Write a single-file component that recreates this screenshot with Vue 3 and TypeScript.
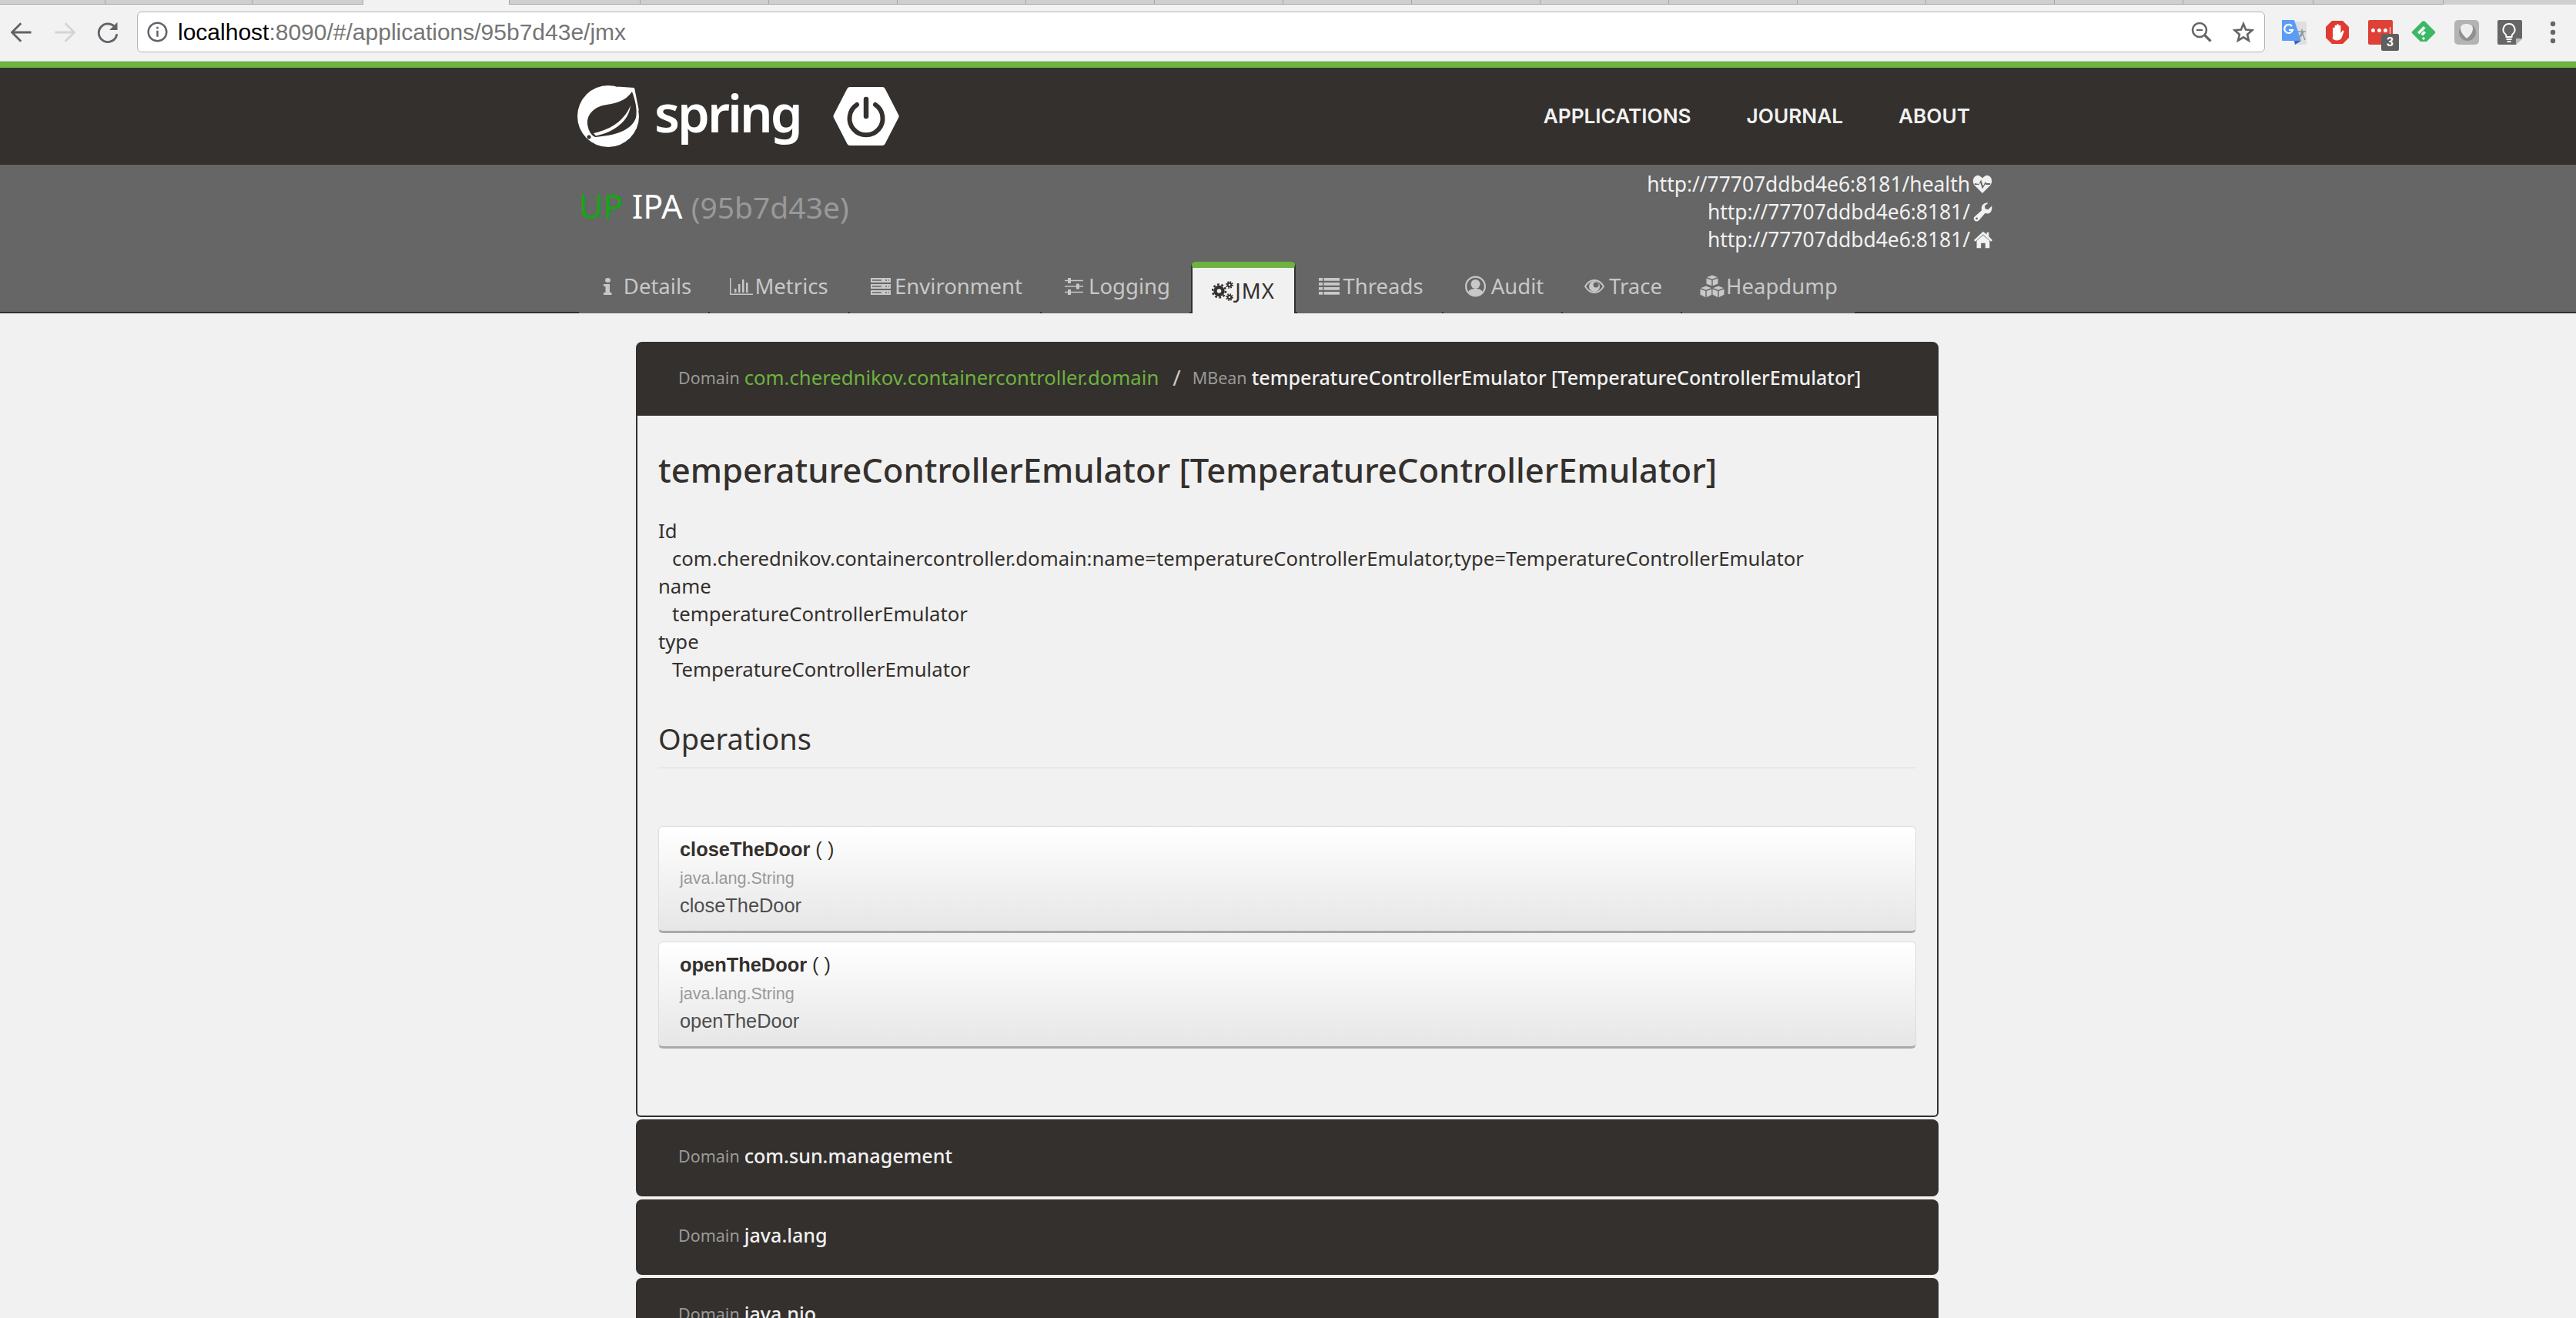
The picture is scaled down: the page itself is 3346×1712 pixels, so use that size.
<template>
  <div class="page">
    <div class="tabstrip">
      <span
        v-for="(s, i) in stripTabs"
        :key="i"
        class="strip-tab"
        :class="{ current: s.current }"
        :style="{ width: s.width + 'px' }"
      ></span>
    </div>
    <div class="toolbar">
      <div class="navbtns">
        <svg class="tb-ico" viewBox="3 3 19 19"><path d="M21 12.500H5M12 4.500l-8 8 8 8" fill="none" stroke="#5f6368" stroke-width="1.900" /></svg>
        <svg class="tb-ico" viewBox="3 3 19 19"><path d="M4 12.500h16M13 4.500l8 8-8 8" fill="none" stroke="#d4d4d4" stroke-width="1.900" /></svg>
        <svg class="tb-ico" viewBox="3 3 19 19"><path d="M19.500 9a8 8 0 1 0 1 5" fill="none" stroke="#5f6368" stroke-width="1.900" /><path d="M21 3.500v7h-7z" fill="#5f6368" /></svg>
      </div>
      <div class="omnibox">
        <svg class="info" viewBox="0 0 24 24"><circle cx="12" cy="12" r="10.500" fill="none" stroke="#5f6368" stroke-width="2.200" /><path d="M12 10.500v7M12 6v2.500" stroke="#5f6368" stroke-width="2.200" /></svg>
        <span class="url"><b>localhost</b>:8090/#/applications/95b7d43e/jmx</span>
        <svg class="zoomout" viewBox="0 0 27 27"><circle cx="11" cy="11" r="9" fill="none" stroke="#666" stroke-width="2.600" /><path d="M7 11h8" stroke="#666" stroke-width="2.200" /><path d="M17.500 17.500l8 8" stroke="#666" stroke-width="3.200" /></svg>
        <svg class="star" viewBox="0 0 28 28"><path d="M14 3l3.100 7.600 8.200.7-6.200 5.400 1.900 8L14 20.400l-7 4.300 1.900-8-6.200-5.400 8.200-.7z" fill="none" stroke="#666" stroke-width="2.600" /></svg>
      </div>
      <div class="exts">
        <svg class="ext" viewBox="0 0 32 32">
          <path d="M14 2h16a2 2 0 0 1 2 2v26a2 2 0 0 1-2 2H16z" fill="#dfdfdf" />
          <path d="M1 0h15l9 27H1a1 1 0 0 1-1-1V1a1 1 0 0 1 1-1z" fill="#5b9cf5" />
          <path d="M16 27h9l-8 5z" fill="#3b62c4" />
          <path d="M13 8a5.500 5.500 0 1 0 1 5H9" fill="none" stroke="#fff" stroke-width="2.200" />
          <path d="M21 15h10M26 12v3M22 26l4-11 4 11M28 15c-1 4-4 7-7 8" fill="none" stroke="#8a9aa8" stroke-width="1.500" />
        </svg>
        <svg class="ext" viewBox="0 0 32 32">
          <path d="M9 1h14l8 8v14l-8 8H9l-8-8V9z" fill="#e03a32" />
          <path d="M10 23V11a1.300 1.300 0 0 1 2.600 0V8a1.300 1.300 0 0 1 2.600 0V6.500a1.300 1.300 0 0 1 2.600 0V8a1.300 1.300 0 0 1 2.600 0v9l2-3c1-1.500 3 0 2 1.500l-3 8c-2 4-11 4-12-.5z" fill="#fff" />
        </svg>
        <div class="ext lastpass">
          <span class="lp-dots"><i></i><i></i><i></i><u></u></span>
          <span class="lp-badge">3</span>
        </div>
        <svg class="ext" viewBox="0 0 32 32">
          <path d="M13.500 2.500a3.500 3.500 0 0 1 5 0l12 12a2 2 0 0 1 0 3L20 28h-8L1.500 17.500a2 2 0 0 1 0-3z" fill="#3cb866" />
          <path d="M16 8l2.500 2.500-8 8L8 16zM16.500 14l2.500 2.500-4 4-2.500-2.500zM16 22l2 2-2 2-2-2z" fill="#fff" />
        </svg>
        <svg class="ext" viewBox="0 0 32 32">
          <rect width="32" height="32" rx="5" fill="#b3b3b3" />
          <circle cx="17" cy="16" r="11" fill="#8f8f8f" />
          <path d="M16 5c5 0 8 2 8 6 0 6-5 11-8 13-2-2-8-7-8-13 0-4 3-6 8-6z" fill="#eee" />
        </svg>
        <svg class="ext" viewBox="0 0 32 32">
          <path d="M0 2a2 2 0 0 1 2-2h28a2 2 0 0 1 2 2v22l-8 8H2a2 2 0 0 1-2-2z" fill="#666" />
          <path d="M32 24h-8v8z" fill="#bbb" />
          <path d="M15 5a7.500 7.500 0 0 0-4.500 13.500c1 1 1 2 1 3.500h7c0-1.500 0-2.500 1-3.500A7.500 7.500 0 0 0 15 5z" fill="none" stroke="#fff" stroke-width="2" />
          <path d="M11.500 25h7M12.500 28h5" stroke="#fff" stroke-width="1.800" />
        </svg>
        <svg class="menu" viewBox="0 0 8 30"><circle cx="4" cy="4" r="3.200" fill="#666" /><circle cx="4" cy="15" r="3.200" fill="#666" /><circle cx="4" cy="26" r="3.200" fill="#666" /></svg>
      </div>
    </div>

    <header class="navbar">
      <div class="brand">
        <svg class="leaf" viewBox="0 0 80 80">
          <circle cx="40" cy="40" r="40" fill="#fff" />
          <path d="M52 1.500L74 3l6 30z" fill="#fff" />
          <path d="M13 50C12 36 24 27 38 25 50 23 63 20 71 8 75.500 20 78 32 76 42 71 55 58 64 24 67 20 67 14 60 13 50z" fill="#34302d" />
          <path d="M21 62C40 58 60 48 69 26 67 45 50 60 24 65.500z" fill="#fff" />
          <circle cx="15" cy="67" r="2.500" fill="#34302d" />
        </svg>
        <span class="wordmark">spring</span>
        <svg class="boot" viewBox="0 0 86 76">
          <path d="M22 0h42a4 4 0 0 1 3.500 2l17.500 34a4 4 0 0 1 0 4L67.500 74a4 4 0 0 1-3.500 2H22a4 4 0 0 1-3.500-2L1 40a4 4 0 0 1 0-4L18.500 2A4 4 0 0 1 22 0z" fill="#fff" />
          <path d="M31 23a21.500 21.500 0 1 0 24 0" fill="none" stroke="#34302d" stroke-width="6" stroke-linecap="round" />
          <path d="M43 16v22" stroke="#34302d" stroke-width="6.500" stroke-linecap="round" />
        </svg>
      </div>
      <nav class="mainnav">
        <a v-for="item in navItems" :key="item">{{ item }}</a>
      </nav>
    </header>

    <section class="appbar">
      <div class="appbar-top">
        <div class="apptitle">
          <span class="up">UP</span> IPA <small>(95b7d43e)</small>
        </div>
        <div class="urls">
          <div v-for="row in urlRows" :key="row.icon" class="urlrow">
            <span>{{ row.url }}</span>
            <svg class="urlico" viewBox="0 0 28 28"><path :d="row.icon" fill="#f1f1f1" fill-rule="evenodd" /></svg>
          </div>
        </div>
      </div>
      <ul class="tabs">
        <li
          v-for="tab in tabs"
          :key="tab.label"
          class="tab"
          :class="{ active: tab.active }"
          :style="{ width: tab.width + 'px', gap: (tab.gap ?? 2) + 'px', paddingLeft: (tab.pad ?? 0) + 'px' }"
        >
          <svg
            class="tabico"
            :viewBox="`0 0 ${tab.iw} ${tab.ih}`"
            :style="{ width: tab.iw + 'px', height: tab.ih + 'px' }"
            v-html="tab.icon"
          ></svg>
          <span>{{ tab.label }}</span>
        </li>
      </ul>
    </section>

    <main class="content">
      <div class="panel-head">
        <small>Domain</small> <span class="green">com.cherednikov.containercontroller.domain</span>
        <span class="slash">/</span>
        <small>MBean</small> <span>temperatureControllerEmulator [TemperatureControllerEmulator]</span>
      </div>
      <div class="panel-body">
        <h2>temperatureControllerEmulator [TemperatureControllerEmulator]</h2>
        <dl>
          <template v-for="p in beanProps" :key="p.k">
            <dt>{{ p.k }}</dt>
            <dd>{{ p.v }}</dd>
          </template>
        </dl>
        <h3>Operations</h3>
        <div class="ops">
          <div v-for="op in ops" :key="op" class="op">
            <div class="op-name"><b>{{ op }}</b> ( )</div>
            <div class="op-type">java.lang.String</div>
            <div class="op-desc">{{ op }}</div>
          </div>
        </div>
      </div>
      <div v-for="d in domains" :key="d" class="domain">
        <small>Domain</small> <span>{{ d }}</span>
      </div>
    </main>
  </div>
</template>

<script setup lang="ts">
interface Tab {
  label: string;
  width: number;
  iw: number;
  ih: number;
  icon: string;
  gap?: number;
  pad?: number;
  active?: boolean;
}

const stripTabs = [
  { width: 137 },
  { width: 191 },
  { width: 144 },
  { width: 190, current: true },
  { width: 170 },
  ...Array.from({ length: 12 }, () => ({ width: 167 })),
  { width: 169 },
  { width: 169 },
];

const navItems = ["APPLICATIONS", "JOURNAL", "ABOUT"];

const urlRows = [
  {
    url: "http://77707ddbd4e6:8181/health",
    icon: "M14 27L3 16C-1 11 1 3 7 2c3 0 5 2 7 4 2-2 4-4 7-4 6 1 8 9 4 14zM3 13v2h6l2-3 3 9 4-7 1 1h6v-2h-5l-2-2-3 6-3-9-3 6z",
  },
  {
    url: "http://77707ddbd4e6:8181/",
    icon: "M27 6c1 4 0 8-3 10-2 1-4 1-6 0L9 26c-2 2-5 2-6 0-2-2-1-4 0-5l10-9c-1-4 0-7 3-9 2-1 4-2 6-1l-5 4 1 4 4 1zM6 22a1.500 1.500 0 1 0 0 3 1.500 1.500 0 0 0 0-3z",
  },
  {
    url: "http://77707ddbd4e6:8181/",
    icon: "M15 8l9 8v10h-6v-7h-6v7H6V16zM15 3l5 4V4h3v6l5 5-2 2L15 7 4 17l-2-2z",
  },
];

const tabs: Tab[] = [
  { label: "Details", width: 168, iw: 24, ih: 22, pad: 10, icon: '<path d="M2 3a3.500 3 0 0 1 7 0 3.500 3 0 0 1-7 0zM0 8h8v11h2.500v3H0v-3h2.500v-8H0z" fill="#c8c8c8"/>' },
  { label: "Metrics", width: 180, iw: 31, ih: 22, gap: 1, icon: '<path d="M0 0h1.500v20.500H30V22H0zM6 14h2.500v5H6zM11 8h2.500v11H11zM16 2h2.500v17H16zM21 6h2.500v13H21z" fill="#c8c8c8"/>' },
  { label: "Environment", width: 247, iw: 26, ih: 22, gap: 5, pad: 4, icon: '<path d="M0 0h26v6H0zM0 8h26v6H0zM0 16h26v6H0z" fill="#c8c8c8"/><path d="M2 3h12M19 3h2M23 3h1M2 11h12M19 11h2M23 11h1M2 19h12M19 19h2M23 19h1" stroke="#666" stroke-width="1.500"/>' },
  { label: "Logging", width: 192, iw: 24, ih: 22, gap: 7, pad: 5, icon: '<path d="M0 3.500h24M0 11h24M0 18.500h24" stroke="#c8c8c8" stroke-width="1.600"/><path d="M4 0h4v7H4zM15 7.500h4v7h-4zM4 15h4v7H4z" fill="#c8c8c8"/>' },
  { label: "JMX", width: 136, active: true, iw: 28, ih: 26, icon: '<g fill="none" stroke="#34302d"><circle cx="9.500" cy="13" r="5" stroke-width="4.400"/><circle cx="9.500" cy="13" r="8.500" stroke-width="2.600" stroke-dasharray="2.700 2.640"/><circle cx="23" cy="5" r="2.300" stroke-width="2"/><circle cx="23" cy="5" r="4" stroke-width="1.800" stroke-dasharray="1.600 1.540"/><circle cx="23" cy="21" r="2.300" stroke-width="2"/><circle cx="23" cy="21" r="4" stroke-width="1.800" stroke-dasharray="1.600 1.540"/></g>' },
  { label: "Threads", width: 188, iw: 27, ih: 22, gap: 4, pad: 4, icon: '<path d="M0 0h5v3.800H0zM6.500 0H27v3.800H6.500zM0 6h5v3.800H0zM6.500 6H27v3.800H6.500zM0 12h5v3.800H0zM6.500 12H27v3.800H6.500zM0 18h5v3.800H0zM6.500 18H27v3.800H6.500z" fill="#c8c8c8"/>' },
  { label: "Audit", width: 153, iw: 27, ih: 28, gap: 7, pad: 5, icon: '<circle cx="13.500" cy="14" r="12.400" fill="none" stroke="#c8c8c8" stroke-width="2.200"/><circle cx="13.500" cy="11" r="6" fill="#c8c8c8"/><path d="M4 22c1-4 5-5 9.500-5s8.500 1 9.500 5c-5 5-14 5-19 0z" fill="#c8c8c8"/>' },
  { label: "Trace", width: 153, iw: 26, ih: 18, gap: 6, pad: 4, icon: '<path d="M1 9C4 4 8 1 13 1s9 3 12 8c-3 5-7 8-12 8S4 14 1 9z" fill="none" stroke="#c8c8c8" stroke-width="1.800"/><circle cx="13" cy="9" r="7" fill="#c8c8c8"/><circle cx="15" cy="7" r="3.500" fill="#666"/>' },
  { label: "Heapdump", width: 224, iw: 34, ih: 30, gap: 1, icon: '<g fill="#c8c8c8" stroke="#666" stroke-width="1"><path d="M17 0l8 3v9l-8 3-8-3V3z"/><path d="M9 14l8 3v9l-8 4-8-4v-9z"/><path d="M25 14l8 3v9l-8 4-8-4v-9z"/></g><path d="M9 3.500l8 3 8-3M17 6.500V15M1 17.500l8 3 8-3M9 20.500V30M17 17.500l8 3 8-3M25 20.500V30" fill="none" stroke="#666" stroke-width="1.400"/>' },
];

const beanProps = [
  { k: "Id", v: "com.cherednikov.containercontroller.domain:name=temperatureControllerEmulator,type=TemperatureControllerEmulator" },
  { k: "name", v: "temperatureControllerEmulator" },
  { k: "type", v: "TemperatureControllerEmulator" },
];

const ops = ["closeTheDoor", "openTheDoor"];

const domains = ["com.sun.management", "java.lang", "java.nio"];
</script>

<style>
html,
body {
  margin: 0;
  background: #f1f1f1;
  overflow: hidden;
}
</style>

<style scoped>
.page {
  height: 1712px;
  overflow: hidden;
  font-family: "Noto Sans", "Open Sans", sans-serif;
  color: #34302d;
  background: #f1f1f1;
}

.tabstrip {
  height: 6px;
  display: flex;
  overflow: hidden;
  background: #cfcfcf;
}

.strip-tab {
  flex: none;
  height: 6px;
  box-sizing: border-box;
  border-right: 1px solid #a5a5a5;
  border-bottom: 1px solid #a5a5a5;
}

.strip-tab.current {
  background: #f2f2f2;
  border-bottom: 0;
}

.toolbar {
  height: 74px;
  box-sizing: border-box;
  background: #f2f2f2;
  border-bottom: 1px solid #cfcfcf;
  display: flex;
  align-items: center;
  padding: 0 0 2px 14px;
}

.navbtns {
  width: 164px;
  display: flex;
  gap: 28px;
}

.tb-ico {
  width: 28px;
  height: 28px;
}

.omnibox {
  width: 2764px;
  height: 53px;
  box-sizing: border-box;
  background: #fff;
  border: 1px solid #b5b5b5;
  border-radius: 6px;
  display: flex;
  align-items: center;
  padding-left: 12px;
}

.info {
  width: 27px;
  height: 27px;
}

.url {
  flex: 1;
  margin-left: 13px;
  font-family: "Liberation Sans", sans-serif;
  font-size: 30px;
  color: #757575;
}

.url b {
  font-weight: 400;
  color: #000;
}

.zoomout {
  width: 27px;
  height: 27px;
}

.star {
  width: 28px;
  height: 28px;
  margin: 0 13px 0 27px;
}

.exts {
  display: flex;
  align-items: center;
  margin-left: 22px;
  gap: 24px;
}

.ext {
  width: 32px;
  height: 32px;
  flex: none;
}

.lastpass {
  position: relative;
  background: #df4137;
  border-radius: 2px;
  display: flex;
  align-items: center;
  justify-content: center;
}

.lp-dots {
  display: flex;
  align-items: center;
  gap: 3px;
  margin-top: -4px;
}

.lp-dots i {
  width: 5px;
  height: 5px;
  border-radius: 50%;
  background: #fff;
}

.lp-dots u {
  width: 1px;
  height: 9px;
  background: #fff;
}

.lp-badge {
  position: absolute;
  right: -8px;
  bottom: -8px;
  width: 23px;
  height: 22px;
  border-radius: 2px;
  background: #5f5f5f;
  color: #fff;
  font: 700 16px/22px "Liberation Sans", sans-serif;
  text-align: center;
}

.menu {
  width: 8px;
  height: 30px;
  margin-left: 12px;
}

.navbar {
  height: 134px;
  box-sizing: border-box;
  background: #34302d;
  border-top: 8px solid #6db33f;
  display: flex;
  align-items: center;
  padding-left: 750px;
  padding-right: 787px;
}

.brand {
  display: flex;
  align-items: center;
  flex: 1;
}

.leaf {
  width: 80px;
  height: 80px;
}

.wordmark {
  width: 185px;
  margin: -10px 0 0 20px;
  font-size: 67px;
  font-weight: 600;
  line-height: 1;
  letter-spacing: -3px;
  color: #fff;
  white-space: nowrap;
}

.boot {
  width: 86px;
  height: 76px;
  margin-left: 47px;
}

.mainnav {
  display: flex;
  gap: 72px;
  padding-bottom: 2px;
  font-family: Inter, sans-serif;
  font-size: 26.200px;
  font-weight: 600;
  color: #f1f1f1;
}

.appbar {
  height: 193px;
  box-sizing: border-box;
  background: #666;
  border-bottom: 2px solid #34302d;
}

.appbar-top {
  height: 126px;
  display: flex;
  justify-content: space-between;
  padding: 7px 757px 0 752px;
  box-sizing: border-box;
}

.apptitle {
  margin-top: 20px;
  font-size: 43px;
  line-height: 54px;
  color: #fff;
}

.apptitle small {
  font-size: 39px;
  color: #999;
}

.up {
  color: #13a813;
}

.urls {
  font-size: 26.400px;
  line-height: 36px;
  color: #f1f1f1;
}

.urlrow {
  display: flex;
  justify-content: flex-end;
  align-items: center;
  gap: 2px;
}

.urlico {
  width: 28px;
  height: 26px;
}

.tabs {
  list-style: none;
  margin: 0;
  padding: 0 0 0 752px;
  display: flex;
  gap: 2px;
  height: 67px;
}

.tab {
  flex: none;
  height: 67px;
  box-sizing: border-box;
  background: #666;
  color: #c8c8c8;
  font-size: 27.500px;
  display: flex;
  align-items: center;
  justify-content: center;
  padding-bottom: 4px;
}

.tab.active {
  background: #f1f1f1;
  color: #34302d;
  border-top: 8px solid #6db33f;
  border-left: 2px solid #34302d;
  border-right: 2px solid #34302d;
  border-radius: 6px 6px 0 0;
  padding-bottom: 0;
  letter-spacing: 1px;
}

.tabico {
  flex: none;
}

.content {
  width: 1692px;
  margin: 37px 0 0 826px;
}

.panel-head,
.domain {
  box-sizing: border-box;
  background: #34302d;
  color: #f1f1f1;
  font-size: 25.100px;
  font-weight: 500;
  display: flex;
  align-items: center;
  gap: 6px;
  padding: 0 0 4px 55px;
}

.panel-head {
  height: 96px;
  border-radius: 8px 8px 0 0;
}

.panel-head small,
.domain small {
  font-size: 21.500px;
  font-weight: 400;
  color: #999;
}

.green {
  font-size: 25.700px;
  font-weight: 400;
  color: #6db33f;
}

.slash {
  margin: 0 9px 0 12px;
  font-size: 28px;
  font-weight: 400;
  color: #ccc;
}

.panel-body {
  height: 911px;
  box-sizing: border-box;
  border: solid #34302d;
  border-width: 0 2px 2px;
  border-radius: 0 0 6px 6px;
  padding: 0 27px;
}

h2 {
  margin: 0;
  padding-top: 41px;
  font-size: 43.600px;
  line-height: 58px;
  font-weight: 500;
}

dl {
  margin: 33px 0 0;
  font-size: 25.700px;
  line-height: 36px;
}

dd {
  margin: 0 0 0 18px;
}

h3 {
  margin: 46px 0 0;
  padding-bottom: 13px;
  border-bottom: 1px solid #ddd;
  font-size: 38px;
  line-height: 50px;
  font-weight: 400;
}

.ops {
  margin-top: 75px;
  display: flex;
  flex-direction: column;
  gap: 11px;
}

.op {
  height: 139px;
  box-sizing: border-box;
  padding: 13px 27px 0;
  border-radius: 6px;
  border: 1px solid #ddd;
  border-bottom: 3px solid #aaa;
  background: linear-gradient(#fff, #e6e6e6);
  font-family: "Liberation Sans", sans-serif;
  color: #4d4d4d;
}

.op-name {
  font-size: 25.400px;
  line-height: 32px;
  color: #34302d;
}

.op-type {
  margin-top: 7px;
  font-size: 21.600px;
  line-height: 30px;
  color: #999;
}

.op-desc {
  margin-top: 3px;
  font-size: 25.400px;
  line-height: 34px;
}

.domain {
  height: 98px;
  margin-top: 4px;
  padding-bottom: 6px;
  border-radius: 8px;
}

.panel-body + .domain {
  height: 100px;
  margin-top: 3px;
}
</style>
